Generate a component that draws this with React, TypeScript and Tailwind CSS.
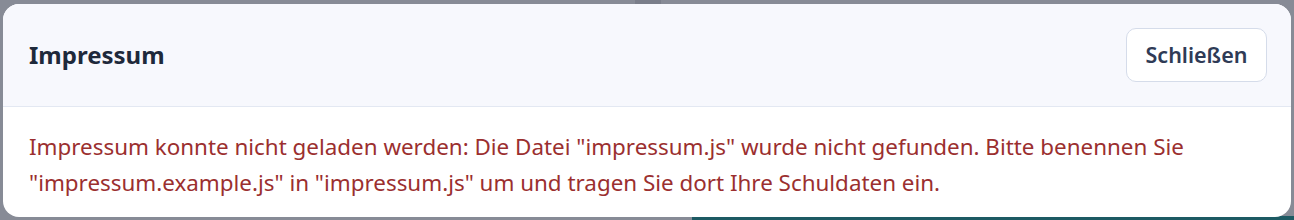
export default function App() {
  return (
    <div
      className="relative h-[220px] w-[1294px] overflow-hidden bg-[#878b96] pl-[3px] pr-[3px] pt-[4px]"
      style={{ fontFamily: '"Noto Sans", "Open Sans", sans-serif' }}
    >
      {/* backdrop leftovers */}
      <div className="absolute bottom-0 left-[692px] right-0 h-[4px] bg-[#1d5a63]" />
      <div className="absolute left-[635px] top-0 h-[4px] w-[26px] bg-[#7a7e8a]" />

      {/* modal */}
      <div className="relative flex h-[213px] flex-col overflow-hidden rounded-2xl bg-white">
        <div className="flex h-[103px] items-center justify-between border-b border-[#e3e8f2] bg-[#f7f8fd] pl-[26px] pr-6">
          <h2 className="text-[24px] font-bold text-[#1e293b]">Impressum</h2>
          <button className="h-[54px] w-[141px] rounded-[10px] border border-[#d5dcea] bg-white text-[21.5px] font-semibold text-[#2f3b56]">
            Schließen
          </button>
        </div>
        <div className="px-[26px] pt-[22px]">
          <p className="whitespace-nowrap text-[22.4px] leading-[36px] text-[#9b2f2f]">
            Impressum konnte nicht geladen werden: Die Datei "impressum.js" wurde nicht gefunden. Bitte benennen Sie
            <br />
            "impressum.example.js" in "impressum.js" um und tragen Sie dort Ihre Schuldaten ein.
          </p>
        </div>
      </div>
    </div>
  );
}
